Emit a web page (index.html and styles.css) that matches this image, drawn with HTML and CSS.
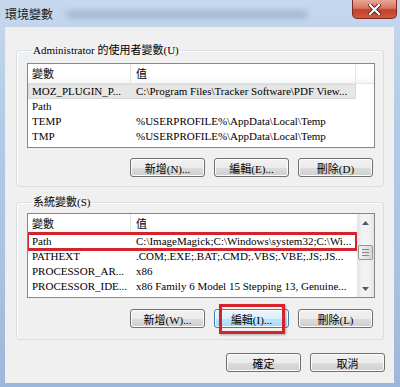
FILE: index.html
```html
<!DOCTYPE html>
<html lang="zh-Hant">
<head>
  <meta charset="UTF-8">
  <title>環境變數</title>
  <link rel="stylesheet" href="styles.css">
</head>
<body>
  <div class="window">
    <div class="titlebar">
      <span class="title">環境變數</span>
      <span class="glass"></span>
      <span class="close">
        <svg width="13" height="11" viewBox="0 0 13 11"><path d="M2 1 L11 10 M11 1 L2 10" stroke="#5a1a14" stroke-width="4" stroke-linecap="square"/><path d="M2 1 L11 10 M11 1 L2 10" stroke="#fff" stroke-width="2.2" stroke-linecap="square"/></svg>
      </span>
    </div>

    <div class="content">
      <fieldset class="group group-user">
        <legend>Administrator 的使用者變數(U)</legend>
        <div class="list">
          <div class="list-main">
            <div class="list-head wide"><span>變數</span><span>值</span><span></span></div>
            <div class="list-row selected"><span>MOZ_PLUGIN_P...</span><span>C:\Program Files\Tracker Software\PDF View...</span></div>
            <div class="list-row"><span>Path</span><span></span></div>
            <div class="list-row"><span>TEMP</span><span>%USERPROFILE%\AppData\Local\Temp</span></div>
            <div class="list-row"><span>TMP</span><span>%USERPROFILE%\AppData\Local\Temp</span></div>
          </div>
        </div>
        <div class="btn-row">
          <button class="btn">新增(N)...</button>
          <button class="btn">編輯(E)...</button>
          <button class="btn">刪除(D)</button>
        </div>
      </fieldset>

      <fieldset class="group group-sys">
        <legend>系統變數(S)</legend>
        <div class="list">
          <div class="list-main">
            <div class="list-head"><span>變數</span><span>值</span></div>
            <div class="list-row marked"><span>Path</span><span>C:\ImageMagick;C:\Windows\system32;C:\Wi...</span></div>
            <div class="list-row"><span>PATHEXT</span><span>.COM;.EXE;.BAT;.CMD;.VBS;.VBE;.JS;.JS...</span></div>
            <div class="list-row"><span>PROCESSOR_AR...</span><span>x86</span></div>
            <div class="list-row"><span>PROCESSOR_IDE...</span><span>x86 Family 6 Model 15 Stepping 13, Genuine...</span></div>
            <div class="list-row"><span>PROCESSOR_LEV...</span><span>6</span></div>
          </div>
          <div class="scrollbar">
            <div class="sb-btn"><svg width="7" height="4" viewBox="0 0 7 4"><path d="M0 4 L3.5 0 L7 4 Z" fill="#4d5b70"/></svg></div>
            <div class="sb-track"><div class="sb-thumb"><i></i><i></i><i></i></div></div>
            <div class="sb-btn"><svg width="7" height="4" viewBox="0 0 7 4"><path d="M0 0 L3.5 4 L7 0 Z" fill="#4d5b70"/></svg></div>
          </div>
        </div>
        <div class="btn-row">
          <button class="btn">新增(W)...</button>
          <button class="btn hover marked-btn">編輯(I)...</button>
          <button class="btn">刪除(L)</button>
        </div>
      </fieldset>

      <div class="dialog-btns">
        <button class="btn">確定</button>
        <button class="btn">取消</button>
      </div>
    </div>
  </div>
</body>
</html>
```

FILE: styles.css
```css
body {
  margin: 0;
  font-family: "Liberation Serif", "Noto Sans CJK TC", serif;
  font-size: 11px;
  color: #000;
}
.window {
  width: 400px;
  height: 387px;
  box-sizing: border-box;
  padding: 0 6px 4px 5px;
  display: flex;
  flex-direction: column;
  background: linear-gradient(180deg, #c6d8ee 0%, #b4cbe6 30%, #a9c2e1 70%, #9cb7da 100%);
  overflow: hidden;
}
.titlebar {
  height: 27px;
  flex: none;
  display: flex;
  align-items: flex-start;
}
.title {
  font-family: "Noto Sans CJK TC", sans-serif;
  font-size: 12px;
  line-height: 14px;
  margin-top: 7px;
  color: #1a1a1a;
}
.glass {
  width: 240px;
  height: 7px;
  margin: 11px 0 0 14px;
  background: rgba(95, 115, 150, 0.35);
  filter: blur(3px);
}
/* caption close button */
.close {
  margin-left: auto;
  margin-right: -3px;
  width: 45px;
  height: 19px;
  box-sizing: border-box;
  border: 1px solid #7c2b22;
  border-top: none;
  border-radius: 0 0 5px 5px;
  background: linear-gradient(180deg, #e9a896 0%, #d9765f 45%, #c3412c 55%, #cf5a3e 100%);
  display: flex;
  align-items: center;
  justify-content: center;
}
.content {
  flex: 1;
  background: #f0f0f0;
  padding: 0 10px 0 10px;
  border-left: 1px solid #e9eef5;
  border-top: 1px solid #e9eef5;
  box-sizing: border-box;
}
.group {
  margin: 0;
  border: 1px solid #d5dfe5;
  border-radius: 3px;
  padding: 0 8px 9px 10px;
  box-shadow: inset 1px 1px 0 #fff;
}
.group legend {
  padding: 0 2px;
  margin-left: 4px;
  line-height: 13px;
}
.group-user {
  margin-top: 16px;
  padding-top: 6px;
}
.group-sys {
  margin-top: 9px;
  padding-top: 4px;
  padding-bottom: 11px;
}
.list {
  height: 85px;
  box-sizing: border-box;
  border: 1px solid #828790;
  background: #fff;
  display: flex;
  overflow: hidden;
}
.list-main {
  flex: 1;
  min-width: 0;
}
.list-head {
  display: grid;
  grid-template-columns: 103px 1fr;
  height: 19px;
  border-bottom: 1px solid #e5e5e5;
  background: linear-gradient(180deg, #fff 0%, #fff 60%, #f5f6f7 100%);
  font-family: "Noto Sans CJK TC", sans-serif;
  font-size: 11px;
  line-height: 19px;
}
.list-head.wide {
  grid-template-columns: 103px 225px 1fr;
}
.list-head span {
  padding-left: 4px;
  border-right: 1px solid #e5e5e5;
}
.list-head span + span {
  padding-left: 5px;
}
.list-head span:last-child {
  border-right: none;
}
.list-head.wide span:nth-child(2) {
  border-right: 1px solid #e5e5e5;
}
.list-row {
  display: grid;
  grid-template-columns: 103px 225px;
  width: 328px;
  height: 15px;
  line-height: 15px;
  white-space: nowrap;
}
.list-row span {
  overflow: hidden;
  padding-left: 4px;
}
.list-row span + span {
  padding-left: 5px;
}
.list-row.selected {
  background: #e6e6e6;
  box-shadow: inset 0 0 0 1px #d9d9d9;
}
.list-row.marked {
  outline: 3px solid #d3232b;
  outline-offset: -1px;
}
.scrollbar {
  width: 17px;
  flex: none;
  display: flex;
  flex-direction: column;
  background: linear-gradient(90deg, #e3e3e3 0%, #f2f2f2 30%, #f2f2f2 70%, #e3e3e3 100%);
}
.sb-btn {
  height: 17px;
  display: flex;
  align-items: center;
  justify-content: center;
}
.sb-track {
  flex: 1;
  padding-top: 14px;
}
.sb-thumb {
  height: 15px;
  margin: 0 1px;
  box-sizing: border-box;
  border: 1px solid #979797;
  border-radius: 2px;
  background: linear-gradient(90deg, #f1f1f1 0%, #e4e4e4 50%, #d6d6d6 100%);
  display: flex;
  flex-direction: column;
  align-items: center;
  justify-content: center;
  gap: 2px;
}
.sb-thumb i {
  display: block;
  width: 7px;
  height: 1px;
  background: #8a8a8a;
}
.btn-row {
  display: flex;
  justify-content: flex-end;
  gap: 9px;
  margin-top: 10px;
  padding-right: 2px;
}
.group-sys .btn-row {
  margin-top: 11px;
}
.btn {
  width: 75px;
  height: 19px;
  padding: 0;
  border: 1px solid #707070;
  border-radius: 3px;
  background: linear-gradient(180deg, #f2f2f2 0%, #ebebeb 50%, #dddddd 51%, #cfcfcf 100%);
  box-shadow: inset 0 0 0 1px #fcfcfc;
  font-family: "Liberation Serif", "Noto Sans CJK TC", serif;
  font-size: 11px;
  color: #000;
  position: relative;
}
.btn.hover {
  border-color: #3c7fb1;
  background: linear-gradient(180deg, #eaf6fd 0%, #d9f0fc 50%, #bee6fd 51%, #a7d9f5 100%);
}
.marked-btn::after {
  content: "";
  position: absolute;
  left: 4px;
  right: 3px;
  top: -6px;
  bottom: -7px;
  border: 3px solid #d3232b;
  box-shadow: 1px 1px 2px rgba(0, 0, 0, 0.3);
}
.dialog-btns {
  display: flex;
  justify-content: flex-end;
  gap: 9px;
  margin-top: 13px;
  margin-right: -1px;
}
```
